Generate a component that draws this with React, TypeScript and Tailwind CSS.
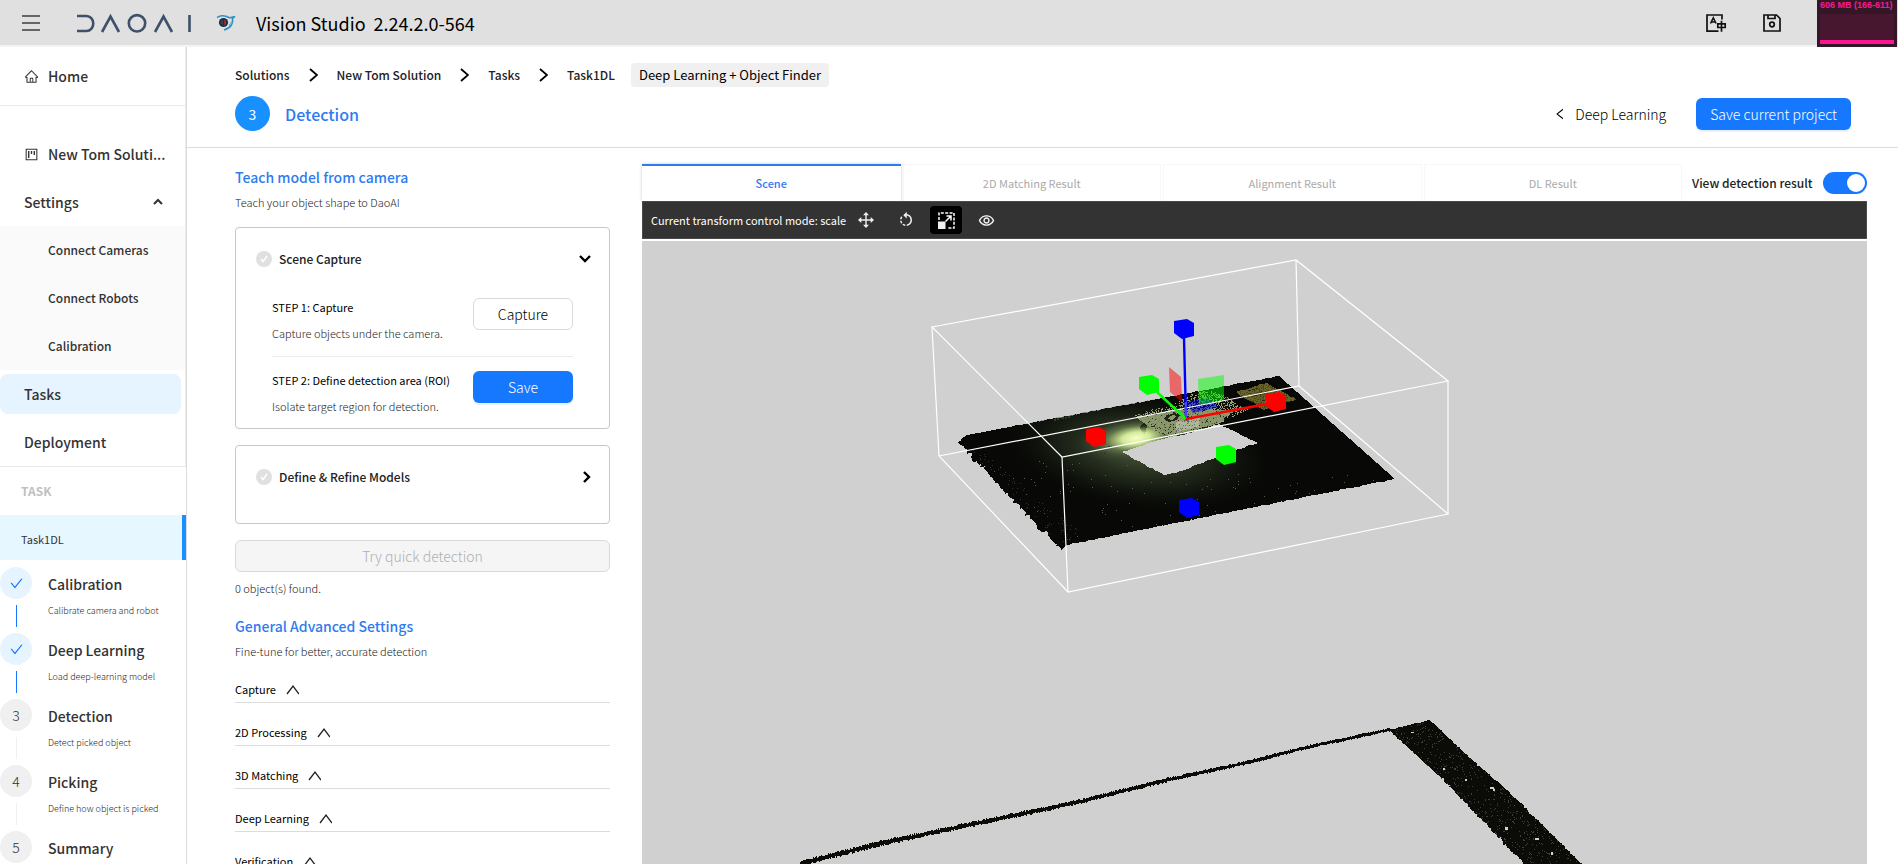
import type { ReactNode } from "react";
import {
  AiOutlineCheck,
  AiOutlineHome,
  AiOutlineLeft,
  AiOutlineProject,
} from "react-icons/ai";
import { MdOutlineRemoveRedEye, MdRotateLeft } from "react-icons/md";

/* ---------- Point cloud scene ---------- */

type Point = [number, number];

function createRandom(seed: number) {
  let state = seed;
  return () => {
    state = (state * 1664525 + 1013904223) % 4294967296;
    return state / 4294967296;
  };
}

/** Walks the outline and displaces it so that it looks like a scanned edge. */
function roughOutline(points: Point[], amounts: number[], step: number, seed: number) {
  const random = createRandom(seed);
  const out: string[] = [];
  points.forEach(([x1, y1], i) => {
    const [x2, y2] = points[(i + 1) % points.length];
    const length = Math.hypot(x2 - x1, y2 - y1);
    const count = Math.max(1, Math.round(length / step));
    const amount = amounts[i % amounts.length];
    for (let k = 0; k < count; k++) {
      const t = k / count;
      const dx = k === 0 ? 0 : (random() - 0.5) * amount;
      const dy = k === 0 ? 0 : (random() - 0.5) * amount;
      out.push(`${(x1 + (x2 - x1) * t + dx).toFixed(1)},${(y1 + (y2 - y1) * t + dy).toFixed(1)}`);
    }
  });
  return out.join(" ");
}

function inside([x, y]: Point, polygon: Point[]) {
  let hit = false;
  for (let i = 0, j = polygon.length - 1; i < polygon.length; j = i++) {
    const [xi, yi] = polygon[i];
    const [xj, yj] = polygon[j];
    if (yi > y !== yj > y && x < ((xj - xi) * (y - yi)) / (yj - yi) + xi) hit = !hit;
  }
  return hit;
}

/** Scatters single pixels over a polygon and joins them into one path. */
function speckle(polygon: Point[], count: number, seed: number, size = 1) {
  const random = createRandom(seed);
  const xs = polygon.map((p) => p[0]);
  const ys = polygon.map((p) => p[1]);
  const x0 = Math.min(...xs);
  const y0 = Math.min(...ys);
  const w = Math.max(...xs) - x0;
  const h = Math.max(...ys) - y0;
  let d = "";
  for (let i = 0; i < count; i++) {
    const x = Math.round(x0 + random() * w);
    const y = Math.round(y0 + random() * h);
    if (inside([x, y], polygon)) d += `M${x} ${y}h${size}v${size}h-${size}z`;
  }
  return d;
}

const plane: Point[] = [
  [958, 442], [967, 435], [1279, 376], [1395, 479], [1066, 545], [1061, 550],
];
const hole: Point[] = [
  [1122, 452], [1152, 442], [1170, 437], [1183, 435], [1219, 424], [1258, 443],
  [1230, 452], [1176, 473], [1164, 475], [1142, 463],
];
const patch: Point[] = [
  [1133, 415], [1152, 409], [1170, 406], [1190, 394], [1206, 390], [1222, 393],
  [1234, 402], [1248, 409], [1220, 423], [1186, 433], [1171, 437], [1156, 430], [1144, 423],
];
const patchCore: Point[] = [
  [1138, 418], [1172, 410], [1190, 409], [1234, 411], [1218, 423], [1186, 433],
  [1171, 437], [1154, 430],
];
const label: Point[] = [[1236, 392], [1266, 383], [1296, 399], [1264, 410]];
const leftFringe: Point[] = [[960, 444], [972, 442], [1080, 530], [1062, 548]];
const lowerHalf: Point[] = [[975, 455], [1395, 476], [1068, 543]];
const band: Point[] = [
  [1389, 730], [1430, 720], [1472, 760], [1507, 790], [1584, 866], [1526, 866],
  [1482, 820], [1440, 777],
];

const planeOutline = roughOutline(plane, [2, 1, 0, 1, 1, 4], 2, 7);
const holeOutline = roughOutline(hole, [1, 0, 0, 1, 1, 1, 1, 2, 2, 2], 3, 3);
const bandOutline = roughOutline(band, [1, 1, 2, 2, 0, 3, 3, 1], 2, 11);
const patchDots = speckle(patch, 3600, 21);
const patchHoles = speckle(patch, 1300, 5);
const coreHoles = speckle(patchCore, 420, 77);
const coreDark = speckle(patchCore, 260, 91);
const labelDots = speckle(label, 700, 9);
const fringeDots = speckle(leftFringe, 420, 13);
const planeDots = speckle(lowerHalf, 170, 31);
const bandDots = speckle(band, 1700, 17);

const edgeLine = (() => {
  const random = createRandom(43);
  const stops: Point[] = [
    [800, 863], [880, 843], [980, 822], [1080, 801], [1160, 781], [1243, 763], [1310, 746], [1390, 729],
  ];
  let d = "";
  for (let s = 0; s < stops.length - 1; s++) {
    const [x1, y1] = stops[s];
    const [x2, y2] = stops[s + 1];
    for (let x = x1; x < x2; x++) {
      const y = y1 + ((y2 - y1) * (x - x1)) / (x2 - x1);
      const thick = 2 + (1390 - x) / 300;
      const top = Math.round(y - (thick / 2) * (0.5 + random()));
      const bottom = Math.round(y + (thick / 2) * (0.5 + random())) + 1;
      d += `M${x} ${top}h1V${bottom}h-1z`;
    }
  }
  return d;
})();

const handles = [
  { x: 1184, y: 329, color: "#0000ff" },
  { x: 1149, y: 385, color: "#00ff00" },
  { x: 1096, y: 437, color: "#ff0000" },
  { x: 1276, y: 402, color: "#ff0000" },
  { x: 1226, y: 455, color: "#00ff00" },
  { x: 1189, y: 508, color: "#0000ff" },
];

function PointCloud() {
  return (
    <svg
      viewBox="642 241 1225 623"
      preserveAspectRatio="xMinYMin slice"
      className="h-full w-full"
      role="img"
      aria-label="Scene point cloud with detection area"
    >
      <defs>
        <clipPath id="plane-clip">
          <polygon points={planeOutline} />
        </clipPath>
        <radialGradient id="wide-glow" gradientUnits="userSpaceOnUse" cx="0" cy="0" r="1" gradientTransform="translate(1138 450) rotate(8) scale(140 60)">
          <stop offset="0" stopColor="#4a583a" />
          <stop offset="0.4" stopColor="#252e1e" />
          <stop offset="0.7" stopColor="#11150e" />
          <stop offset="1" stopColor="#080906" stopOpacity="0" />
        </radialGradient>
        <radialGradient id="mid-glow" gradientUnits="userSpaceOnUse" cx="0" cy="0" r="1" gradientTransform="translate(1136 438) rotate(-6) scale(62 24)">
          <stop offset="0" stopColor="#cfe69a" />
          <stop offset="0.4" stopColor="#869e63" stopOpacity="0.85" />
          <stop offset="0.7" stopColor="#4a5c3c" stopOpacity="0.45" />
          <stop offset="1" stopColor="#2a3524" stopOpacity="0" />
        </radialGradient>
        <radialGradient id="hot-glow" gradientUnits="userSpaceOnUse" cx="0" cy="0" r="1" gradientTransform="translate(1136 438) rotate(-8) scale(28 12)">
          <stop offset="0" stopColor="#f6ffc4" />
          <stop offset="0.5" stopColor="#dff5a4" stopOpacity="0.8" />
          <stop offset="1" stopColor="#a5bf74" stopOpacity="0" />
        </radialGradient>
      </defs>

      <polygon points={planeOutline} fill="#080906" shapeRendering="crispEdges" />
      <g clipPath="url(#plane-clip)">
        <rect x="950" y="370" width="450" height="190" fill="url(#wide-glow)" />
        <rect x="1050" y="400" width="170" height="90" fill="url(#mid-glow)" />
        <g shapeRendering="crispEdges">
          <path d={patchDots} fill="#95a272" />
          <path d={patchHoles} fill="#12150d" />
          <polygon points={roughOutline(patchCore, [3], 3, 19)} fill="#8b986b" />
          <path d={coreHoles} fill="#76825a" />
          <path d={coreDark} fill="#2a3020" />
          <path d="M1166 416l8-3 6 2-3 5-8 2-5-3zM1140 426l4-4 3 4-2 8-4-3zM1185 416l5 1-1 5-4-1z" fill="#20251a" />
          <path d="M1170 416l4-1 2 2-4 3-4-1z" fill="#8b986b" />
          <polygon points={roughOutline(label, [2], 3, 23)} fill="#67632a" />
          <path d={labelDots} fill="#4a4719" />
          <path d="M1248 391l10-3M1254 396l14-4M1262 401l16-5M1270 404l14-4" stroke="#2b2a12" strokeWidth="1" strokeDasharray="3 1" />
          <path d="M1054 420l6-2M1062 418l8-1M1068 416l4-1M1101 453h5M1108 447h4" stroke="#3a3c20" strokeWidth="2" strokeDasharray="2 1" />
          <path d={fringeDots} fill="#2f332a" />
          <path d={planeDots} fill="#565b50" />
        </g>
        <rect x="1100" y="415" width="80" height="50" fill="url(#hot-glow)" />
      </g>
      <polygon points={holeOutline} fill="#d0d0d0" shapeRendering="crispEdges" />

      <polygon points="1185,402 1207,398 1219,407 1193,413" fill="#0000ff" fillOpacity="0.5" />
      <polygon points="1176,422 1200,417 1199,427 1176,432" fill="#ffffff" fillOpacity="0.3" />
      <polygon points="1169,367 1181,377 1182,402 1170,392" fill="#ff0000" fillOpacity="0.5" />
      <polygon points="1198,379 1224,375 1224,400 1199,405" fill="#00ff00" fillOpacity="0.5" />

      <g fill="none" stroke="#ffffff" strokeWidth="1.2">
        <polygon points="932,327 1296,260 1448,381 1062,457" />
        <polygon points="939,456 1299,386 1448,514 1068,592" />
        <path d="M932 327L939 456M1296 260L1299 386M1448 381V514M1062 457L1068 592" />
      </g>

      <g strokeWidth="2.4" fill="none">
        <path d="M1184 338L1186 419" stroke="#0000ff" />
        <path d="M1157 392L1186 419" stroke="#00ff00" />
        <path d="M1267 404L1186 419" stroke="#ff0000" />
        <path d="M1186 402V418" stroke="#5a5aff" strokeWidth="1.5" />
      </g>
      {handles.map(({ x, y, color }) => (
        <polygon
          key={`${x}-${y}`}
          points="-10,-8 3,-10 10,-6 10,7 -2,10 -10,4"
          transform={`translate(${x} ${y})`}
          fill={color}
        />
      ))}

      <g shapeRendering="crispEdges">
        <path d={edgeLine} fill="#0b0c07" />
        <polygon points={bandOutline} fill="#0b0c07" />
        <path d={bandDots} fill="#3e4038" />
        <path d="M1411 732h3v1h-3zM1490 787h4v2h-4zM1493 789h2v2h-2zM1465 779h2v2h-2zM1505 827h3v3h-3zM1535 838h4v2h-4zM1498 838h3v2h-3zM1551 852h2v3h-2zM1443 768h2v2h-2z" fill="#d0d0d0" />
      </g>
    </svg>
  );
}

/* ---------- Icons ---------- */

function Logo() {
  return (
    <svg width="116" height="20" viewBox="0 0 116 20" fill="none" stroke="#3f506b" strokeWidth="2.6" role="img" aria-label="DAOAI">
      <path d="M1 3h9.500a6.500 7.200 0 0 1 0 15H1" />
      <path d="M26 19l8.500-15.500L43 19" />
      <circle cx="61" cy="10.300" r="8.200" />
      <path d="M79 19l8.500-15.500L96 19" />
      <path d="M113.500 2v17" />
    </svg>
  );
}

function BirdMark() {
  return (
    <svg width="20" height="18" viewBox="0 0 20 18" fill="none" aria-hidden="true">
      <path d="M1 3.500c3-1.500 4.500-2.500 7.500-1.500 3 0 4 2.500 6.500 1.500l4-1-2.500 2c1 4.500-1.500 9.500-8.500 11.500" stroke="#2e8fc4" strokeWidth="1.600" />
      <path d="M13 11.500c2-1 2.500-2.500 2.700-4" stroke="#5cb5dc" strokeWidth="1.500" />
      <circle cx="7.500" cy="8.500" r="4.600" fill="#2c2b38" />
      <path d="M8.500 5.500c2 1.500 2 4.500 0 6.500z" fill="#b03a48" />
      <path d="M6.500 6c-1.500 1.500-1.500 3.500 0 5z" fill="#2f5d9a" />
    </svg>
  );
}

function Chevron({ d, w, h, stroke = 1.4 }: { d: string; w: number; h: number; stroke?: number }) {
  return (
    <svg width={w} height={h} viewBox={`0 0 ${w} ${h}`} fill="none" stroke="currentColor" strokeWidth={stroke} aria-hidden="true" className="shrink-0">
      <path d={d} />
    </svg>
  );
}

function LanguageIcon() {
  return (
    <svg width="22" height="20" viewBox="0 0 22 20" fill="none" stroke="#111" strokeWidth="1.7" aria-hidden="true">
      <path d="M13.500 18.200H2V2h15v4.500" />
      <path d="M5.500 10.500L8.300 4.800l2.800 5.700M6.500 9h3.600" strokeWidth="1.5" />
      <path d="M12.800 10.800h7.400v3.700h-7.400zM16.500 7.800v11" />
    </svg>
  );
}

function SaveIcon() {
  return (
    <svg width="20" height="20" viewBox="0 0 20 20" fill="none" stroke="#111" strokeWidth="1.7" aria-hidden="true">
      <path d="M2 2h12.500L18 5.500V18H2z" />
      <path d="M6 2v3.500h7V2" />
      <circle cx="10" cy="11.500" r="2.300" />
    </svg>
  );
}

function MoveIcon() {
  return (
    <svg width="16" height="16" viewBox="0 0 16 16" aria-hidden="true">
      <path d="M8 2v12M2 8h12" stroke="#f0f0f0" strokeWidth="1.400" />
      <path d="M8 0l3 3.300H5zM8 16l3-3.300H5zM0 8l3.300-3v6zM16 8l-3.300-3v6z" fill="#f0f0f0" />
    </svg>
  );
}

function ScaleIcon() {
  return (
    <svg width="17" height="17" viewBox="0 0 17 17" fill="none" stroke="#fff" aria-hidden="true">
      <path d="M1 8V1h15v15H9" strokeWidth="1.500" strokeDasharray="3 1.400" />
      <path d="M0 9.500h7.500V17H0z" fill="#f0f0f0" stroke="none" />
      <path d="M7.500 9.500L13 4M8.500 4H13v4.500" strokeWidth="1.500" />
    </svg>
  );
}

function StatusDot() {
  return (
    <span className="flex size-4 shrink-0 items-center justify-center rounded-full bg-[#e0e0e0] text-white">
      <Chevron d="M1 4l2 2.500L7 1" w={8} h={8} stroke={1.5} />
    </span>
  );
}

/* ---------- Header ---------- */

function TopBar() {
  return (
    <header className="flex h-[47px] shrink-0 items-center border-b-2 border-[#f3f3f3] bg-[#e0e0e0] pl-[22px] pr-[116px]">
      <button type="button" aria-label="Menu" className="text-[#666]">
        <Chevron d="M0 1h18M0 8h18M0 15h18" w={18} h={16} stroke={1.8} />
      </button>
      <div className="ml-9 flex items-center gap-6">
        <Logo />
        <BirdMark />
      </div>
      <h1 className="ml-5 flex gap-2 text-[18px] leading-6 text-black">
        <span>Vision Studio</span>
        <span>2.24.2.0-564</span>
      </h1>
      <div className="ml-auto flex items-center gap-[35px]">
        <button type="button" aria-label="Language"><LanguageIcon /></button>
        <button type="button" aria-label="Save"><SaveIcon /></button>
      </div>
    </header>
  );
}

function MemoryMeter() {
  return (
    <div className="fixed top-0 right-[1px] flex h-[47px] w-20 flex-col bg-[#351626] px-[3px] pb-[3px]">
      <span className="h-[14px] whitespace-nowrap font-[Liberation_Sans] text-[9px] leading-[10px] font-bold text-[#fc1691]">606 MB (166-611)</span>
      <div className="flex flex-1 items-end bg-[#47162f]">
        <div className="h-1 w-full bg-[#fc1691]" />
      </div>
    </div>
  );
}

/* ---------- Sidebar ---------- */

const steps = [
  { title: "Calibration", note: "Calibrate camera and robot", done: true },
  { title: "Deep Learning", note: "Load deep-learning model", done: true },
  { title: "Detection", note: "Detect picked object", done: false },
  { title: "Picking", note: "Define how object is picked", done: false },
  { title: "Summary", note: "", done: false },
];

function Sidebar() {
  return (
    <aside className="flex w-[187px] shrink-0 flex-col overflow-hidden border-r border-[#dcdcdc] text-sm font-medium text-[#333]">
      <nav className="shrink-0 border-r border-b border-[#ebebeb]">
        <a href="#home" className="flex h-[59px] items-center gap-[9px] border-b border-[#ebebeb] pl-6">
          <AiOutlineHome size={15} />
          Home
        </a>
        <a href="#solution" className="mt-6 flex h-12 items-center gap-[9px] pl-6">
          <AiOutlineProject size={15} />
          New Tom Soluti...
        </a>
        <button type="button" className="flex h-12 w-full items-center justify-between pr-[22px] pl-6">
          Settings
          <Chevron d="M1 6l4-4 4 4" w={10} h={8} stroke={2} />
        </button>
        <div className="bg-[#fafafa] text-xs">
          {["Connect Cameras", "Connect Robots", "Calibration"].map((item) => (
            <a key={item} href="#settings" className="flex h-12 items-center pl-12">{item}</a>
          ))}
        </div>
        <a href="#tasks" className="my-1 mr-1 flex h-10 items-center rounded-lg bg-[#e6f4ff] pl-6">Tasks</a>
        <a href="#deployment" className="flex h-12 items-center pl-6">Deployment</a>
      </nav>
      <h2 className="flex h-12 shrink-0 items-center pl-[21px] text-xs font-bold text-[#c0c0c0]">TASK</h2>
      <a href="#task1dl" className="flex h-[45px] shrink-0 items-center border-r-4 border-[#1890ff] bg-[#e6f7ff] pt-1 pl-[21px] text-[11px] font-normal">Task1DL</a>
      <ol className="mt-[7px]">
        {steps.map(({ title, note, done }, i) => (
          <li key={title} className="flex h-[66px] gap-4">
            <div className="flex w-8 flex-col items-center">
              {done ? (
                <span className="flex size-8 items-center justify-center rounded-full bg-[#e6f4ff] text-[#1677ff]">
                  <AiOutlineCheck size={15} />
                </span>
              ) : (
                <span className="flex size-8 items-center justify-center rounded-full bg-[#f0f0f0] font-light">{i + 1}</span>
              )}
              <span className={done ? "mt-[6px] h-[22px] w-px bg-[#1677ff]" : "mt-[6px] h-[22px] w-px bg-[#f0f0f0]"} />
            </div>
            <div>
              <p className="h-[34px] leading-[34px]">{title}</p>
              {note && <p className="text-[9px] leading-5 font-light whitespace-nowrap text-[#222]">{note}</p>}
            </div>
          </li>
        ))}
      </ol>
    </aside>
  );
}

/* ---------- Page header ---------- */

function PageHeader() {
  const crumbs = ["Solutions", "New Tom Solution", "Tasks", "Task1DL"];
  return (
    <div className="h-[101px] shrink-0 border-b border-[#dcdcdc] pt-4 pr-[47px] pl-12">
      <div className="flex h-6 items-center text-xs font-medium text-[#222]">
        {crumbs.map((crumb, i) => (
          <div key={crumb} className="flex items-center">
            {i > 0 && (
              <span className="mx-[19px] flex text-black">
                <Chevron d="M1 1l7 6-7 6" w={9} h={14} stroke={1.8} />
              </span>
            )}
            <a href="#crumb">{crumb}</a>
          </div>
        ))}
        <span className="ml-4 rounded bg-[#f0f0f0] px-2 text-[13px] leading-6 font-normal text-black">Deep Learning + Object Finder</span>
      </div>
      <div className="mt-[9px] flex items-center">
        <span className="flex size-[35px] items-center justify-center rounded-full bg-[#1890ff] text-sm text-white">3</span>
        <h2 className="ml-[15px] text-base leading-6 font-medium text-[#2f7bf0]">Detection</h2>
        <div className="ml-auto flex items-center gap-[30px] text-sm font-light">
          <button type="button" className="flex items-center gap-2 text-black">
            <AiOutlineLeft size={14} />
            Deep Learning
          </button>
          <button type="button" className="h-8 rounded-md bg-[#1677ff] px-[14px] text-white shadow-[0_2px_0_#e6f2ff]">Save current project</button>
        </div>
      </div>
    </div>
  );
}

/* ---------- Settings column ---------- */

function CardTitle({ title, children }: { title: string; children: ReactNode }) {
  return (
    <button type="button" className="flex h-6 w-full items-center gap-[7px] text-xs font-medium text-[#222]">
      <StatusDot />
      {title}
      <span className="ml-auto flex text-black">{children}</span>
    </button>
  );
}

function StepRow({ title, note, children }: { title: string; note: string; children: ReactNode }) {
  return (
    <div className="flex justify-between">
      <div className="whitespace-nowrap">
        <h4 className="text-[11px] leading-5 font-normal text-black">{title}</h4>
        <p className="mt-[6px] text-[11px] leading-5 font-light text-[#222]">{note}</p>
      </div>
      <div className="pt-px">{children}</div>
    </div>
  );
}

function SettingsColumn() {
  return (
    <section className="w-[375px] shrink-0 overflow-hidden pt-px">
      <h3 className="text-sm leading-6 font-medium text-[#2f7bf0]">Teach model from camera</h3>
      <p className="mt-[3px] text-[11px] leading-5 font-light text-[#222]">Teach your object shape to DaoAI</p>

      <div className="mt-[15px] h-[202px] rounded border border-[#c8c8c8] pt-[19px] pr-[18px] pl-5">
        <CardTitle title="Scene Capture">
          <Chevron d="M1 1l5 5 5-5" w={12} h={8} stroke={2.4} />
        </CardTitle>
        <div className="mt-[26px] mr-[18px] ml-4">
          <StepRow title="STEP 1: Capture" note="Capture objects under the camera.">
            <button type="button" className="h-8 w-[100px] rounded-md border border-[#d9d9d9] text-sm font-light text-black">Capture</button>
          </StepRow>
          <hr className="my-[13px] border-[#ececec]" />
          <StepRow title="STEP 2: Define detection area (ROI)" note="Isolate target region for detection.">
            <button type="button" className="h-8 w-[100px] rounded-md bg-[#1677ff] text-sm font-light text-white shadow-[0_2px_0_#e6f2ff]">Save</button>
          </StepRow>
        </div>
      </div>

      <div className="mt-4 h-[79px] rounded border border-[#c8c8c8] pt-[19px] pr-[18px] pl-5">
        <CardTitle title="Define & Refine Models">
          <Chevron d="M1 1l5 5-5 5" w={8} h={12} stroke={2.4} />
        </CardTitle>
      </div>

      <button type="button" disabled className="mt-4 h-8 w-full rounded-md border border-[#d9d9d9] bg-[#f5f5f5] text-sm font-light text-[#b0b0b0]">Try quick detection</button>
      <p className="mt-[6px] text-[11px] leading-5 font-light text-[#222]">0 object(s) found.</p>

      <h3 className="mt-4 text-sm leading-6 font-medium text-[#2f7bf0]">General Advanced Settings</h3>
      <p className="mt-[3px] text-[11px] leading-5 font-light text-[#222]">Fine-tune for better, accurate detection</p>

      <div className="mt-[18px]">
        {["Capture", "2D Processing", "3D Matching", "Deep Learning", "Verification"].map((name) => (
          <button key={name} type="button" className="mb-[19px] flex h-6 w-full items-start gap-[10px] border-b border-[#dcdcdc] text-[11px] leading-5 text-black">
            {name}
            <span className="flex h-5 items-center text-[#222]">
              <Chevron d="M1 10l6-8 6 8" w={13} h={11} stroke={1.3} />
            </span>
          </button>
        ))}
      </div>
    </section>
  );
}

/* ---------- Viewer ---------- */

function Viewer() {
  return (
    <section className="flex min-w-0 flex-1 flex-col">
      <div className="flex h-[37px] shrink-0">
        <div role="tablist" className="grid flex-1 grid-cols-4 gap-[2px] text-[11px]">
          <button type="button" role="tab" aria-selected="true" className="border-t-2 border-[#2f7bf0] bg-white font-medium text-[#2f7bf0] shadow-[0_0_3px_#c8c8c8]">Scene</button>
          {["2D Matching Result", "Alignment Result", "DL Result"].map((name) => (
            <button key={name} type="button" role="tab" aria-selected="false" className="border border-b-0 border-[#f8f8f8] text-[#aaa]">{name}</button>
          ))}
        </div>
        <label className="ml-[10px] flex w-[175px] shrink-0 items-center justify-between text-xs font-medium whitespace-nowrap text-[#222]">
          View detection result
          <input
            type="checkbox"
            role="switch"
            defaultChecked
            className="relative h-[22px] w-11 appearance-none rounded-full bg-[#bfbfbf] before:absolute before:top-[2px] before:left-[2px] before:size-[18px] before:rounded-full before:bg-white checked:bg-[#1677ff] checked:before:left-6"
          />
        </label>
      </div>
      <div className="flex h-[38px] shrink-0 items-center border border-[#4a4a4a] bg-[#333] pl-2 text-[11px] text-white">
        Current transform control mode: scale
        <div className="ml-1 flex items-center gap-2">
          <button type="button" aria-label="Translate" className="flex h-7 w-8 items-center justify-center rounded-sm"><MoveIcon /></button>
          <button type="button" aria-label="Rotate" className="flex h-7 w-8 items-center justify-center rounded-sm text-[#f0f0f0]"><MdRotateLeft size={18} /></button>
          <button type="button" aria-label="Scale" aria-pressed="true" className="flex h-7 w-8 items-center justify-center rounded-sm bg-black"><ScaleIcon /></button>
          <button type="button" aria-label="Visibility" className="flex h-7 w-8 items-center justify-center rounded-sm text-[#f0f0f0]"><MdOutlineRemoveRedEye size={17} /></button>
        </div>
      </div>
      <div className="mt-[2px] min-h-0 flex-1 overflow-hidden bg-[#d0d0d0]">
        <PointCloud />
      </div>
    </section>
  );
}

export default function App() {
  return (
    <div className="flex h-screen flex-col overflow-hidden bg-white font-[Noto_Sans_CJK_SC,Noto_Sans,sans-serif]">
      <TopBar />
      <MemoryMeter />
      <div className="flex min-h-0 flex-1">
        <Sidebar />
        <main className="flex min-w-0 flex-1 flex-col">
          <PageHeader />
          <div className="flex min-h-0 flex-1 gap-8 pt-4 pr-[31px] pl-12">
            <SettingsColumn />
            <Viewer />
          </div>
        </main>
      </div>
    </div>
  );
}
